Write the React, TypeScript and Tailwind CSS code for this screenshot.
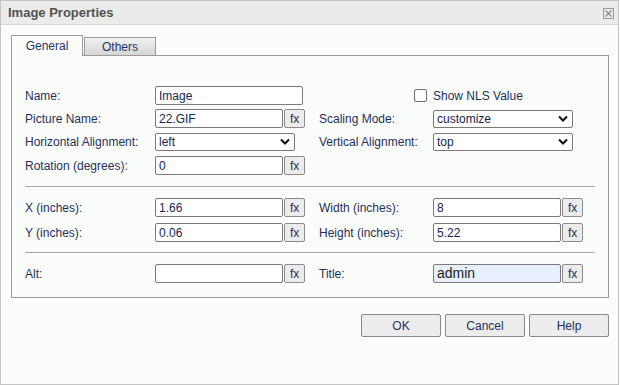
import React from "react";

const font = { fontFamily: '"Liberation Sans", Arial, sans-serif' };

function Fx() {
  return (
    <button className="w-[21px] h-[19px] ml-px rounded-[2px] border border-[#8c8c8c] bg-[#ececec] text-[12px] leading-none text-[#1f2f5c] flex items-center justify-center">
      fx
    </button>
  );
}

function TextInput({ value, width = "w-[129px]", highlight = false }: { value: string; width?: string; highlight?: boolean }) {
  return (
    <div
      className={`${width} h-[19px] rounded-[2px] border border-[#7a7a7a] px-[3px] flex items-center ${
        highlight ? "bg-[#e8f0fd] text-[14px] text-[#1a1a1a]" : "bg-white text-[12px] text-[#14264f]"
      }`}
    >
      {value}
    </div>
  );
}

function Select({ value }: { value: string }) {
  return (
    <div className="w-[140px] h-[18px] rounded-[2px] border border-[#7a7a7a] bg-white pl-[3px] pr-[4px] flex items-center justify-between text-[12px] text-[#14264f]">
      <span>{value}</span>
      <svg width="10" height="7" viewBox="0 0 10 7">
        <polyline points="1,1.5 5,5.5 9,1.5" fill="none" stroke="#111" strokeWidth="2" />
      </svg>
    </div>
  );
}

function Label({ children, wide = false }: { children: React.ReactNode; wide?: boolean }) {
  return <div className={`${wide ? "w-[130px]" : "w-[114px]"} text-[12px] text-[#1f2f5c] shrink-0`}>{children}</div>;
}

function FieldFx({ value, highlight }: { value: string; highlight?: boolean }) {
  return (
    <div className="flex w-[150px]">
      <TextInput value={value} highlight={highlight} />
      <Fx />
    </div>
  );
}

export default function App() {
  return (
    <div style={font} className="w-[619px] h-[385px] bg-[#fbfdfb] border border-[#c4c4c4] flex flex-col">
      {/* Title bar */}
      <div className="h-[24px] bg-[#ebecea] border-b border-[#d6d7d5] flex items-center justify-between pl-[7px] pr-[4px] shrink-0">
        <span className="text-[13px] font-bold text-[#525252]">Image Properties</span>
        <div className="w-[11px] h-[11px] border border-[#9a9a9a] flex items-center justify-center mt-px">
          <svg width="7" height="7" viewBox="0 0 7 7">
            <path d="M0.5 0.5 L6.5 6.5 M6.5 0.5 L0.5 6.5" stroke="#8a8a8a" strokeWidth="1.2" />
          </svg>
        </div>
      </div>

      <div className="pl-[10px] pt-[10px]">
        {/* Tabs */}
        <div className="flex items-end h-[20px]">
          <div className="w-[72px] h-[21px] border border-b-0 border-[#9a9a9a] bg-[#fbfdfb] relative z-10 -mb-px flex items-center justify-center text-[12px] text-[#1f3466]">
            General
          </div>
          <div className="w-[72px] h-[18px] ml-px border border-b-0 border-[#9a9a9a] bg-gradient-to-b from-[#f2f2f2] to-[#d6d6d6] flex items-center justify-center text-[12px] text-[#1f3466]">
            Others
          </div>
        </div>

        {/* Panel */}
        <div className="w-[598px] h-[243px] border border-[#9a9a9a] pl-[13px] pt-[30px]">
          <div className="flex flex-col gap-[4px]">
            <div className="flex items-center h-[19px]">
              <Label wide>Name:</Label>
              <TextInput value="Image" width="w-[148px]" />
              <div className="ml-[16px] w-[114px] flex justify-end pr-[6px]">
                <div className="w-[13px] h-[13px] rounded-[2px] border border-[#707070] bg-white" />
              </div>
              <span className="text-[12px] text-[#1f2f5c]">Show NLS Value</span>
            </div>
            <div className="flex items-center h-[19px]">
              <Label wide>Picture Name:</Label>
              <FieldFx value="22.GIF" />
              <div className="ml-[14px]" />
              <Label>Scaling Mode:</Label>
              <Select value="customize" />
            </div>
            <div className="flex items-center h-[19px]">
              <Label wide>Horizontal Alignment:</Label>
              <div className="w-[150px]">
                <Select value="left" />
              </div>
              <div className="ml-[14px]" />
              <Label>Vertical Alignment:</Label>
              <Select value="top" />
            </div>
            <div className="flex items-center h-[19px] mt-[1px]">
              <Label wide>Rotation (degrees):</Label>
              <FieldFx value="0" />
            </div>
          </div>

          <div className="w-[570px] h-px bg-[#a8a8a8] mt-[11px]" />

          <div className="flex flex-col gap-[6px] mt-[11px]">
            <div className="flex items-center h-[19px]">
              <Label wide>X (inches):</Label>
              <FieldFx value="1.66" />
              <div className="ml-[14px]" />
              <Label>Width (inches):</Label>
              <FieldFx value="8" />
            </div>
            <div className="flex items-center h-[19px]">
              <Label wide>Y (inches):</Label>
              <FieldFx value="0.06" />
              <div className="ml-[14px]" />
              <Label>Height (inches):</Label>
              <FieldFx value="5.22" />
            </div>
          </div>

          <div className="w-[570px] h-px bg-[#a8a8a8] mt-[10px]" />

          <div className="flex items-center h-[19px] mt-[11px]">
            <Label wide>Alt:</Label>
            <FieldFx value="" />
            <div className="ml-[14px]" />
            <Label>Title:</Label>
            <FieldFx value="admin" highlight />
          </div>
        </div>
      </div>

      {/* Buttons */}
      <div className="flex justify-end gap-[4px] pr-[9px] mt-[16px]">
        {["OK", "Cancel", "Help"].map((b) => (
          <button
            key={b}
            className="w-[80px] h-[23px] rounded-[2px] border border-[#8a8a8a] bg-[#ececec] text-[12px] text-[#1f2f5c]"
          >
            {b}
          </button>
        ))}
      </div>
    </div>
  );
}
